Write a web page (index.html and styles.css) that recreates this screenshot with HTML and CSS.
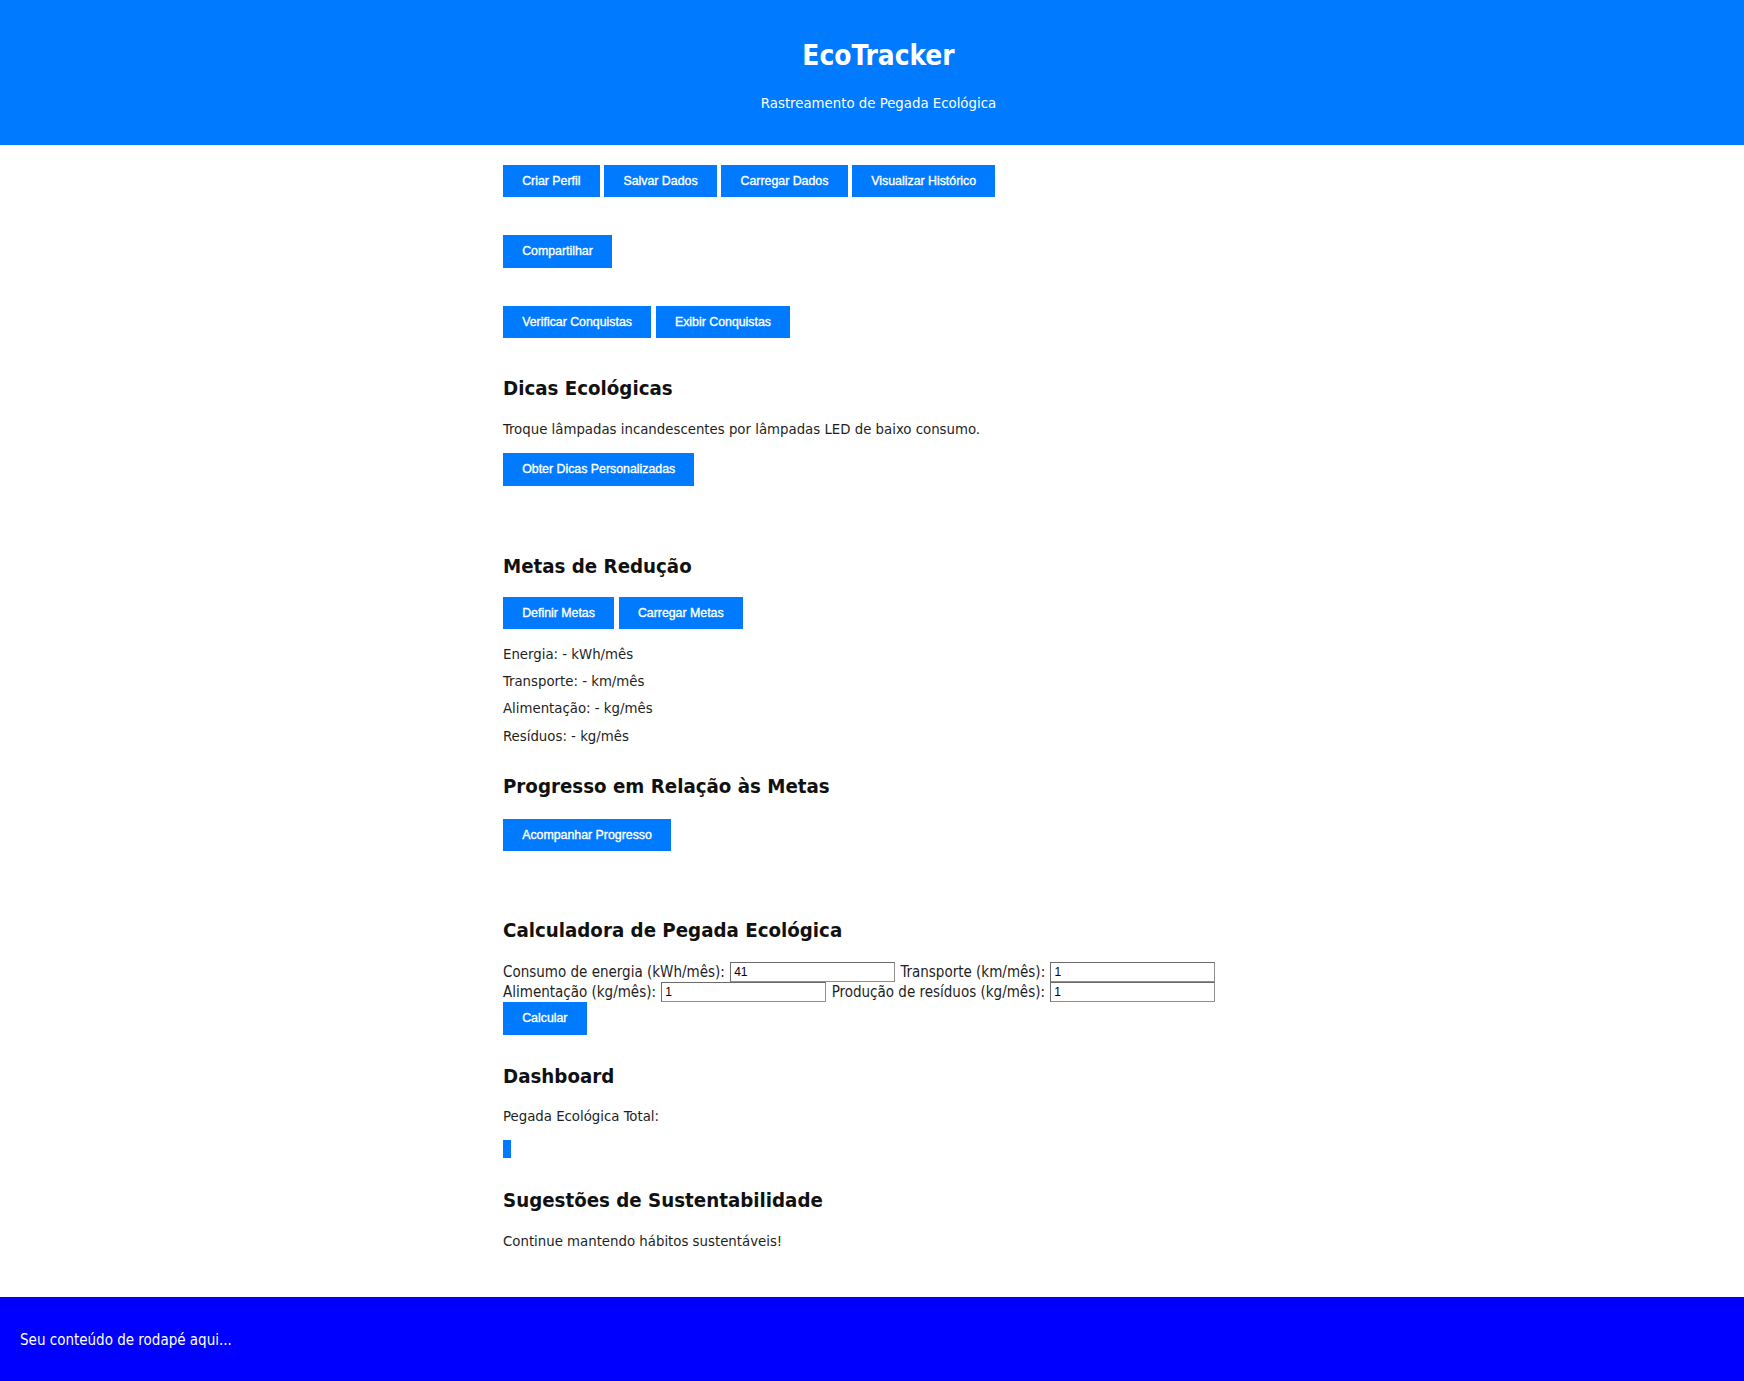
FILE: index.html
```html
<!DOCTYPE html>
<html lang="pt-BR">
<head>
<meta charset="utf-8">
<title>EcoTracker</title>
<link rel="stylesheet" href="styles.css">
</head>
<body>
<header class="site-header">
  <h1 class="site-title">EcoTracker</h1>
  <p class="site-subtitle">Rastreamento de Pegada Ecológica</p>
</header>

<main class="container">
  <div class="btn-row first">
    <button class="btn">Criar Perfil</button>
    <button class="btn">Salvar Dados</button>
    <button class="btn">Carregar Dados</button>
    <button class="btn">Visualizar Histórico</button>
  </div>
  <div class="btn-row">
    <button class="btn">Compartilhar</button>
  </div>
  <div class="btn-row">
    <button class="btn">Verificar Conquistas</button>
    <button class="btn">Exibir Conquistas</button>
  </div>

  <section class="section tips">
    <h2 class="section-title">Dicas Ecológicas</h2>
    <p class="text">Troque lâmpadas incandescentes por lâmpadas LED de baixo consumo.</p>
    <div class="btn-row inner">
      <button class="btn">Obter Dicas Personalizadas</button>
    </div>
  </section>

  <section class="section goals">
    <h2 class="section-title">Metas de Redução</h2>
    <div class="btn-row inner">
      <button class="btn">Definir Metas</button>
      <button class="btn">Carregar Metas</button>
    </div>
    <ul class="goal-list">
      <li>Energia: - kWh/mês</li>
      <li>Transporte: - km/mês</li>
      <li>Alimentação: - kg/mês</li>
      <li>Resíduos: - kg/mês</li>
    </ul>
  </section>

  <section class="section progress">
    <h2 class="section-title">Progresso em Relação às Metas</h2>
    <div class="btn-row inner">
      <button class="btn">Acompanhar Progresso</button>
    </div>
  </section>

  <section class="section calculator">
    <h2 class="section-title">Calculadora de Pegada Ecológica</h2>
    <form class="calc-form">
      <div class="calc-line">
        <label>Consumo de energia (kWh/mês):</label> <input class="field" type="text" value="41"> <label>Transporte (km/mês):</label> <input class="field" type="text" value="1">
      </div>
      <div class="calc-line">
        <label>Alimentação (kg/mês):</label> <input class="field" type="text" value="1"> <label>Produção de resíduos (kg/mês):</label> <input class="field" type="text" value="1">
      </div>
      <button class="btn" type="button">Calcular</button>
    </form>
  </section>

  <section class="section dashboard">
    <h2 class="section-title">Dashboard</h2>
    <p class="text">Pegada Ecológica Total:</p>
    <div class="bar-track"><div class="bar" style="width: 8px"></div></div>
  </section>

  <section class="section suggestions">
    <h2 class="section-title">Sugestões de Sustentabilidade</h2>
    <p class="text">Continue mantendo hábitos sustentáveis!</p>
  </section>
</main>

<footer class="site-footer">
  <p class="footer-text">Seu conteúdo de rodapé aqui...</p>
</footer>
</body>
</html>
```

FILE: styles.css
```css
* {
  box-sizing: border-box;
}

html, body {
  margin: 0;
  padding: 0;
}

body {
  font-family: "DejaVu Sans Condensed", "DejaVu Sans", sans-serif;
  font-stretch: condensed;
  font-size: 14.8px;
  line-height: 17px;
  color: #1e1e1e;
  background: #fff;
}

.site-header {
  background: #007bff;
  color: #fff;
  height: 145px;
  padding-top: 40px;
  padding-left: 13px;
  text-align: center;
}

.site-title {
  margin: 0;
  font-size: 27.8px;
  line-height: 32px;
  font-weight: bold;
}

.site-subtitle {
  margin: 22px 0 0;
  font-size: 14.8px;
  line-height: 17px;
}

.container {
  width: 738px;
  margin: 0 auto;
  padding-bottom: 48px;
}

.btn-row {
  display: flex;
  gap: 4.6px;
  margin-bottom: 38px;
}

.btn-row.first {
  margin-top: 19.5px;
}

.btn-row.inner {
  margin-bottom: 0;
}

.btn {
  font-family: "Liberation Sans", Arial, sans-serif;
  font-size: 12.35px;
  line-height: 14px;
  height: 32.5px;
  padding: 0 19.2px;
  border: none;
  border-radius: 0;
  background: #007bff;
  color: #fff;
  -webkit-text-stroke: 0.35px #fff;
  cursor: pointer;
}

.section-title {
  margin: 0;
  font-size: 20.3px;
  line-height: 24px;
  font-weight: bold;
  color: #111;
}

.text {
  margin: 0;
}

.tips {
  margin-top: 1.5px;
}

.tips .text {
  margin-top: 19.5px;
  margin-bottom: 16.5px;
}

.goals {
  margin-top: 68px;
}

.goals .btn-row {
  margin-top: 19px;
}

.goal-list {
  list-style: none;
  margin: 16px 0 0;
  padding: 0;
  display: flex;
  flex-direction: column;
  gap: 10.2px;
}

.progress {
  margin-top: 30.5px;
}

.progress .btn-row {
  margin-top: 20.5px;
}

.calculator {
  margin-top: 67px;
}

.calc-form {
  margin-top: 20px;
}

.calc-line {
  height: 20px;
  line-height: 20px;
  white-space: nowrap;
  font-size: 15px;
}

.field {
  width: 165px;
  height: 19.5px;
  vertical-align: top;
  margin: 0 1px;
  padding: 0 3px;
  font-family: "Liberation Sans", Arial, sans-serif;
  font-size: 12px;
  color: #000;
  border: 1px solid #8f8f8f;
  border-top-color: #6b6b6b;
  border-left-color: #6b6b6b;
  background: #fff;
}

.dashboard {
  margin-top: 29.5px;
}

.dashboard .text {
  margin-top: 19px;
}

.bar-track {
  margin-top: 16px;
  height: 18px;
}

.bar {
  height: 18px;
  background: #007bff;
}

.suggestions {
  margin-top: 30px;
}

.suggestions .text {
  margin-top: 19.5px;
}

.site-footer {
  background: #0000ff;
  color: #fff;
  height: 84px;
  padding: 35.5px 20px 0;
  font-size: 15px;
}

.footer-text {
  margin: 0;
}
```
